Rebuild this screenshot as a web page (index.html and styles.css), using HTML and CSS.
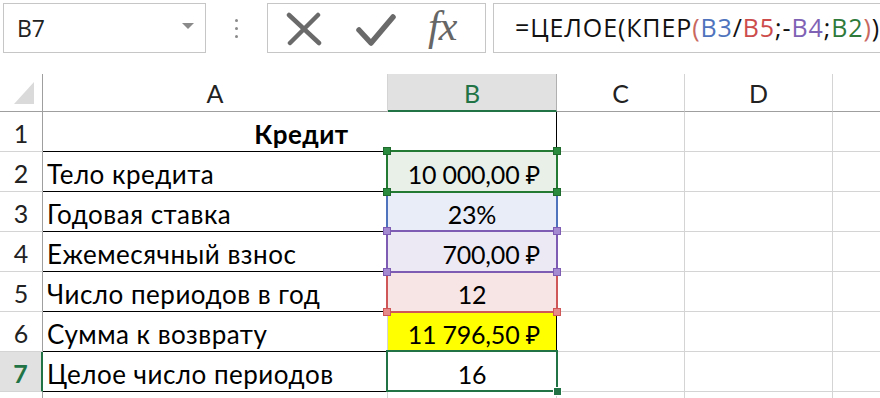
FILE: index.html
```
<!DOCTYPE html>
<html lang="ru">
<head>
<meta charset="utf-8">
<title>КПЕР</title>
<link rel="stylesheet" href="styles.css">
</head>
<body>
<div class="app">
  <div class="bar">
    <div class="namebox"><span class="name">B7</span><span class="caret"></span></div>
    <div class="grip"><i></i><i></i><i></i></div>
    <div class="btns">
      <svg class="ico-x" width="36" height="34" viewBox="0 0 36 34"><path d="M3 3 L33 31 M32 3 L4 31" stroke="#6a6a6a" stroke-width="4.5" stroke-linecap="round" fill="none"/></svg>
      <svg class="ico-ok" width="40" height="34" viewBox="0 0 40 34"><path d="M3 17 L15 30 L37 4" stroke="#6a6a6a" stroke-width="5.5" stroke-linecap="round" stroke-linejoin="round" fill="none"/></svg>
      <span class="fx">fx</span>
    </div>
    <div class="formula">=ЦЕЛОЕ(КПЕР<span class="f-par">(</span><span class="f-b3">B3</span>/<span class="f-b5">B5</span>;-<span class="f-b4">B4</span>;<span class="f-b2">B2</span><span class="f-par">)</span>)</div>
  </div>

  <div class="sheet">
    <div class="hd corner"><span class="tri"></span></div>
    <div class="hd col">A</div>
    <div class="hd col sel">B</div>
    <div class="hd col">C</div>
    <div class="hd col">D</div>
    <div class="hd col last"></div>

    <div class="hd row">1</div>
    <div class="c t merged title">Кредит</div>
    <div class="c"></div><div class="c"></div><div class="c last"></div>

    <div class="hd row">2</div>
    <div class="c t">Тело кредита</div>
    <div class="c t v money ref-host z4"><span class="txt">10 000,00 ₽</span><span class="ref green"><i class="h tl"></i><i class="h tr"></i><i class="h bl"></i><i class="h br"></i></span></div>
    <div class="c"></div><div class="c"></div><div class="c last"></div>

    <div class="hd row">3</div>
    <div class="c t">Годовая ставка</div>
    <div class="c t v center ref-host z1"><span class="txt">23%</span><span class="ref blue"></span></div>
    <div class="c"></div><div class="c"></div><div class="c last"></div>

    <div class="hd row">4</div>
    <div class="c t">Ежемесячный взнос</div>
    <div class="c t v money ref-host z3"><span class="txt">700,00 ₽</span><span class="ref purple"><i class="h tl"></i><i class="h tr"></i><i class="h bl"></i><i class="h br"></i></span></div>
    <div class="c"></div><div class="c"></div><div class="c last"></div>

    <div class="hd row">5</div>
    <div class="c t">Число периодов в год</div>
    <div class="c t v center ref-host z2"><span class="txt">12</span><span class="ref red"><i class="h bl"></i><i class="h br"></i></span></div>
    <div class="c"></div><div class="c"></div><div class="c last"></div>

    <div class="hd row">6</div>
    <div class="c t">Сумма к возврату</div>
    <div class="c t v money yellow">11 796,50 ₽</div>
    <div class="c"></div><div class="c"></div><div class="c last"></div>

    <div class="hd row sel">7</div>
    <div class="c t">Целое число периодов</div>
    <div class="c t v center ref-host z5"><span class="txt">16</span><span class="active"><i class="fill"></i></span></div>
    <div class="c"></div><div class="c"></div><div class="c last"></div>

    <div class="hd row"></div>
    <div class="c t"></div>
    <div class="c t"></div>
    <div class="c"></div><div class="c"></div><div class="c last"></div>
  </div>
</div>
</body>
</html>
```

FILE: styles.css
```
* { box-sizing: border-box; }
html, body { margin: 0; padding: 0; background: #fff; }
body { width: 880px; height: 398px; overflow: hidden; font-family: "Lato", "Noto Sans", sans-serif; color: #000; }

.bar { display: flex; align-items: flex-start; height: 74px; padding-top: 3px; font-family: "Open Sans", "Noto Sans", sans-serif; }
.namebox { margin-left: 3px; width: 203px; height: 50px; border: 1px solid #c6c6c6; display: flex; align-items: center; justify-content: space-between; padding: 0 11px 0 13px; }
.name { font-size: 23px; color: #222; }
.caret { width: 0; height: 0; border-left: 6px solid transparent; border-right: 6px solid transparent; border-top: 6px solid #8a8a8a; margin-top: -4px; }
.grip { width: 61px; height: 50px; display: flex; flex-direction: column; align-items: center; justify-content: center; gap: 5px; }
.grip i { width: 3px; height: 3px; background: #8a8a8a; border-radius: 50%; }
.btns { width: 219px; height: 50px; border: 1px solid #c6c6c6; display: flex; align-items: center; padding-left: 18px; }
.ico-x { margin-top: 2px; }
.ico-ok { margin-left: 34px; margin-top: 4px; }
.fx { margin-left: 32px; font-family: "Liberation Serif", "DejaVu Serif", serif; font-style: italic; font-size: 42px; color: #666; line-height: 1; margin-top: -4px; letter-spacing: -1px; }
.formula { margin-left: 7px; flex: 1; height: 50px; border: 1px solid #c6c6c6; border-right: none; padding-left: 21px; font-size: 25px; line-height: 46px; white-space: nowrap; color: #111; letter-spacing: 0.9px; }
.f-par { color: #c8685f; }
.f-b3 { color: #4f74bd; }
.f-b5 { color: #cc4c4c; }
.f-b4 { color: #8062b5; }
.f-b2 { color: #2e7a3a; }

.sheet { display: grid; grid-template-columns: 43px 345px 169px 128px 148px 47px; grid-template-rows: 38px repeat(7, 40px) 20px; }
.hd { background: #fff; display: flex; align-items: center; justify-content: center; font-size: 25px; color: #222; border-right: 1px solid #d4d4d4; border-bottom: 1px solid #d4d4d4; }
.hd.col { border-bottom: 1px solid #9f9f9f; }
.hd.row { border-right: 1px solid #9f9f9f; padding-top: 3px; }
.hd.col.sel { background: #e1e1e1; color: #217346; border-bottom: 2px solid #217346; border-right-color: #b0b0b0; padding-top: 2px; }
.hd.row.sel { background: #e1e1e1; color: #217346; font-weight: bold; border-right: 2px solid #217346; }
.hd.last { border-right: none; }
.corner { position: relative; border-right: 1px solid #9f9f9f; border-bottom: 1px solid #9f9f9f; }
.tri { position: absolute; right: 8px; bottom: 7px; width: 0; height: 0; border-left: 20px solid transparent; border-bottom: 22px solid #dadada; }

.c { border-right: 1px solid #d4d4d4; border-bottom: 1px solid #d4d4d4; font-size: 26px; letter-spacing: 0.5px; display: flex; align-items: center; padding-top: 4px; }
.c.last { border-right: none; }
.c.t { border-bottom: 1px solid #000; padding-left: 4px; }
.c.merged { grid-column: span 2; border-right: 1px solid #000; justify-content: center; font-weight: bold; }
.c.v { border-right: 1px solid #000; padding-left: 0; font-size: 25px; letter-spacing: -0.2px; }
.center { justify-content: center; }
.money { justify-content: flex-end; padding-right: 16px; }
.yellow { background: #ffff00; }

.ref-host { position: relative; }
.txt { position: relative; z-index: 0; }
.z1 { z-index: 1; } .z2 { z-index: 2; } .z3 { z-index: 3; } .z4 { z-index: 4; } .z5 { z-index: 5; }
.ref { position: absolute; left: -2px; right: -2px; top: -2px; bottom: -2px; border: 2px solid; z-index: -1; }
.ref.green { border-color: #237a33; background: #e8f0e8; }
.ref.blue { border-color: #4f74bd; background: #e8edf7; border-top: none; border-bottom: none; top: 0; bottom: 0; }
.ref.purple { border-color: #7e5cb3; background: #ede9f4; }
.ref.red { border-color: #cf5757; background: #f7e5e5; border-top: none; top: 0; }
.h { position: absolute; width: 8px; height: 8px; border: 1px solid; }
.green .h { background: #2a8a3d; border-color: #1f6b2d; }
.purple .h { background: #a48ad0; border-color: #7e5cb3; }
.red .h { background: #e58a8a; border-color: #cf5757; }
.h.tl { left: -5px; top: -5px; }
.h.tr { right: -5px; top: -5px; }
.h.bl { left: -5px; bottom: -5px; }
.h.br { right: -5px; bottom: -5px; }
.active { position: absolute; left: -2px; right: -2px; top: -2px; bottom: -1px; border: 2px solid #217346; }
.fill { position: absolute; right: -6px; bottom: -6px; width: 9px; height: 9px; background: #217346; border: 1px solid #fff; }
```
